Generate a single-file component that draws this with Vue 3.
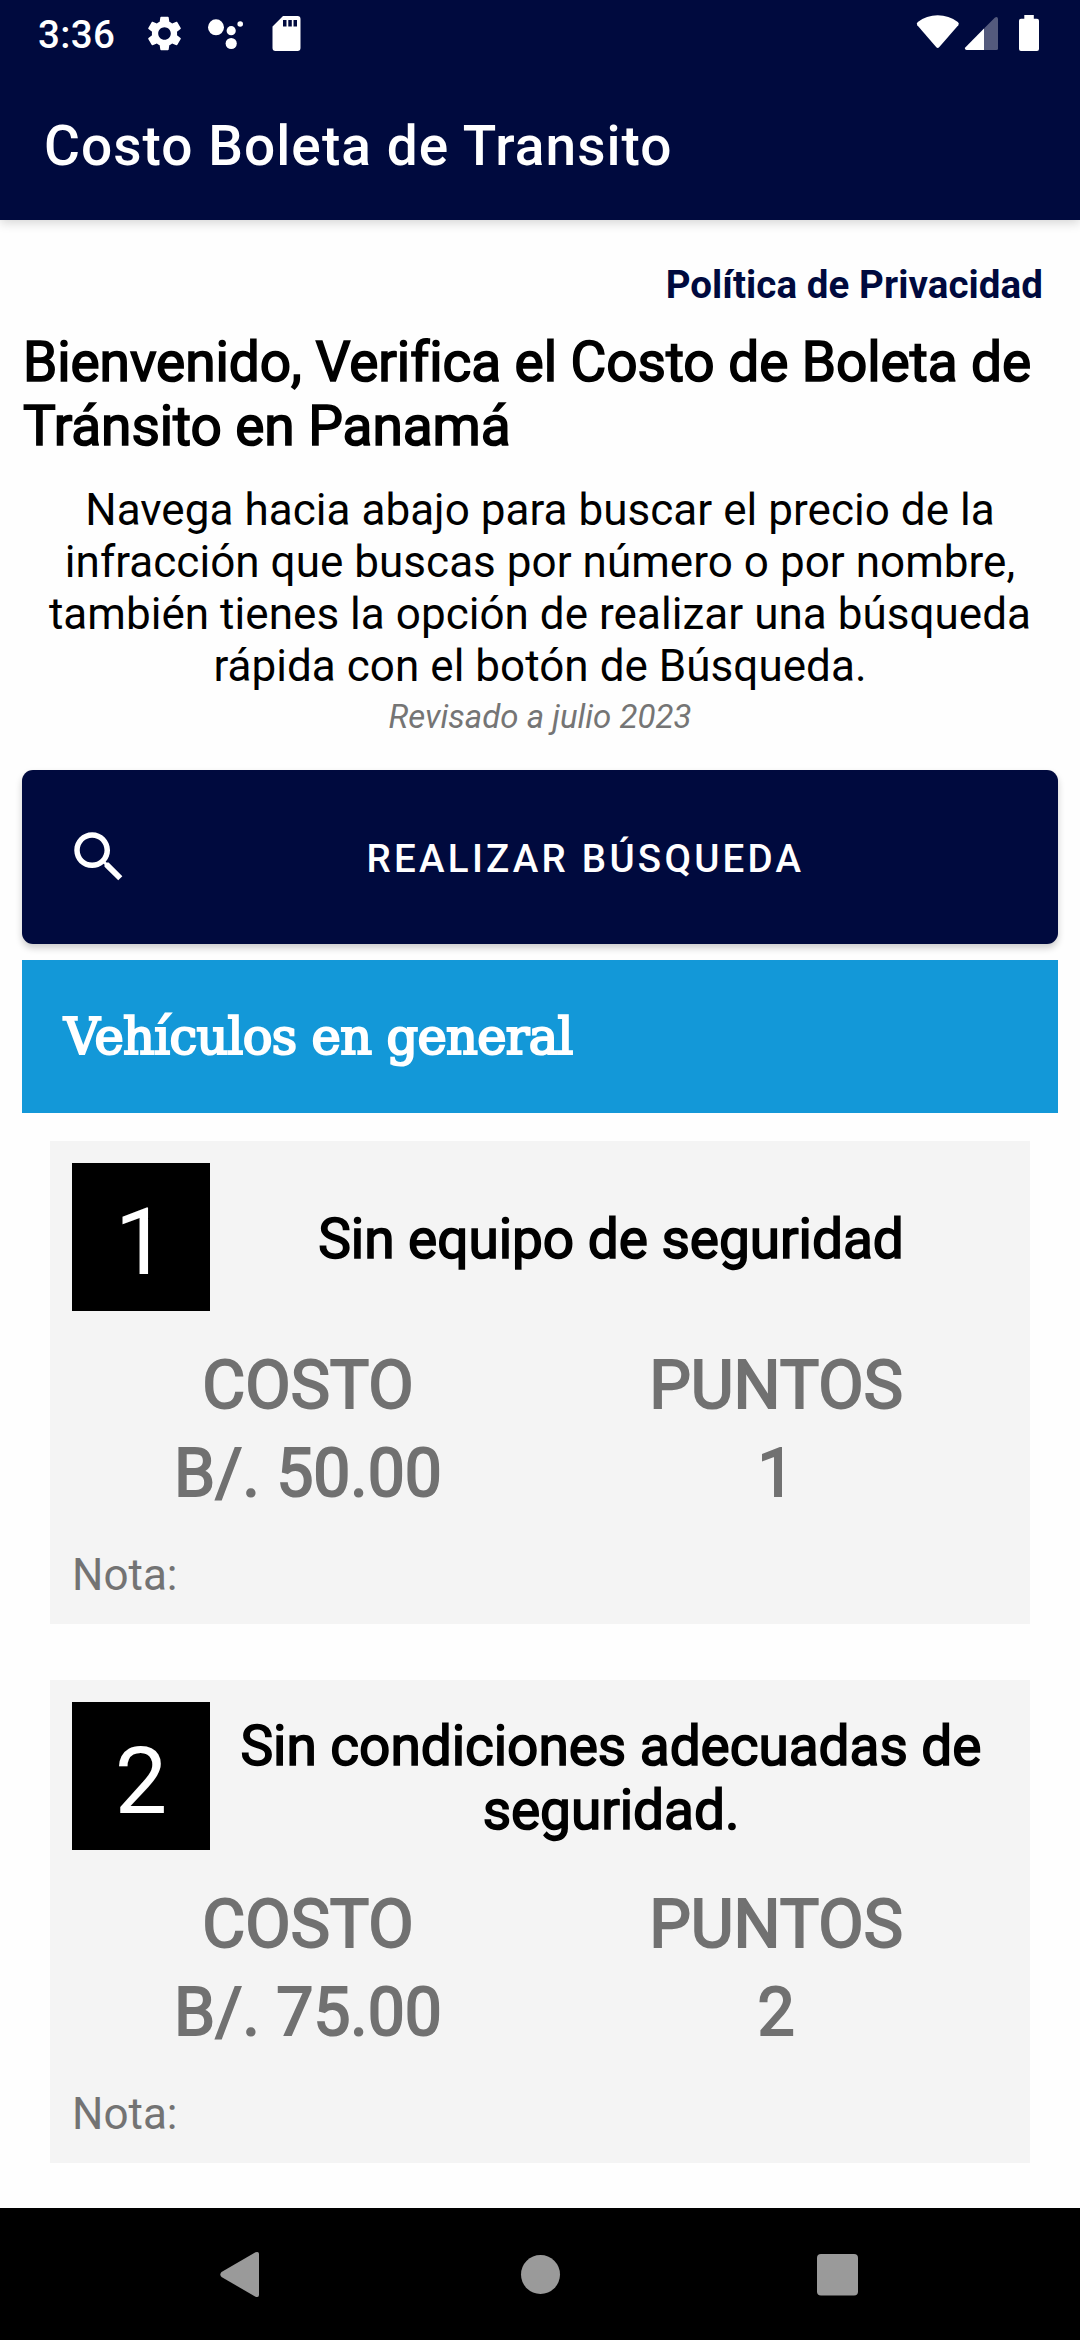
<script setup>
import { ref } from "vue";

const infracciones = ref([
  { id: 1, nombre: "Sin equipo de seguridad", costo: "50.00", puntos: 1 },
  {
    id: 2,
    nombre: "Sin condiciones adecuadas de seguridad.",
    costo: "75.00",
    puntos: 2,
  },
]);
</script>

<template>
  <div class="screen">
    <header>
      <div class="status-bar">
        <span class="time">3:36</span>
        <svg class="left-icons" width="160" height="66" viewBox="144 0 160 66">
          <g transform="translate(143.5 12.5) scale(1.75)">
            <path
              d="M19.14 12.94c.04-.3.06-.61.06-.94 0-.32-.02-.64-.07-.94l2.03-1.58c.18-.14.23-.41.12-.61l-1.92-3.32c-.12-.22-.37-.29-.59-.22l-2.39.96c-.5-.38-1.03-.7-1.62-.94l-.36-2.54c-.04-.24-.24-.41-.48-.41h-3.84c-.24 0-.43.17-.47.41l-.36 2.54c-.59.24-1.13.57-1.62.94l-2.39-.96c-.22-.08-.47 0-.59.22L2.74 8.87c-.12.21-.08.47.12.61l2.03 1.58c-.05.3-.09.63-.09.94s.02.64.07.94l-2.03 1.58c-.18.14-.23.41-.12.61l1.92 3.32c.12.22.37.29.59.22l2.39-.96c.5.38 1.03.7 1.62.94l.36 2.54c.05.24.24.41.48.41h3.84c.24 0 .44-.17.47-.41l.36-2.54c.59-.24 1.13-.56 1.62-.94l2.39.96c.22.08.47 0 .59-.22l1.92-3.32c.12-.22.07-.47-.12-.61l-2.01-1.58zM12 15.6c-1.98 0-3.6-1.62-3.6-3.6s1.62-3.6 3.6-3.6 3.6 1.62 3.6 3.6-1.62 3.6-3.6 3.6z"
            />
          </g>
          <circle cx="216" cy="27.3" r="8" />
          <circle cx="231.2" cy="30.7" r="4.6" />
          <circle cx="231.2" cy="43.5" r="5.6" />
          <circle cx="240.2" cy="24" r="2.8" />
          <path
            fill-rule="evenodd"
            d="M283 16h14.500a3 3 0 0 1 3 3v29a3 3 0 0 1-3 3h-22a3 3 0 0 1-3-3V26.500zM283 20v6.500h3.500V20zM288.300 20v6.500h3.500V20zM293.500 20v6.500h3.500V20z"
          />
        </svg>
        <svg class="right-icons" width="128" height="66" viewBox="914 0 128 66">
          <path
            d="M917.300 25.200q-1.300-1.800.5-3.200Q926.500 15.300 937.700 15.300T957.800 22q1.800 1.400.5 3.200L939.300 47q-1.600 1.800-3.200 0z"
          />
          <path d="M984 28.500V50h-17.500q-2.700-.5-1-2.700z" />
          <path
            class="dim"
            d="M984 28.500l11-11q2.600-1.500 3 1.200V48.500q0 1.500-1.500 1.500H984z"
          />
          <path
            d="M1024.300 15h9.500v3.700h3.200a2 2 0 0 1 2 2V49a2 2 0 0 1-2 2h-16a2 2 0 0 1-2-2V20.700a2 2 0 0 1 2-2h3.300z"
          />
        </svg>
      </div>
      <h1>Costo Boleta de Transito</h1>
    </header>

    <main>
      <a class="privacy">Política de Privacidad</a>
      <h2>Bienvenido, Verifica el Costo de Boleta de Tránsito en Panamá</h2>
      <p class="intro">
        Navega hacia abajo para buscar el precio de la<br />
        infracción que buscas por número o por nombre,<br />
        también tienes la opción de realizar una búsqueda<br />
        rápida con el botón de Búsqueda.
      </p>
      <p class="revised">Revisado a julio 2023</p>

      <button>
        <svg width="66" height="66" viewBox="0 0 24 24">
          <path
            d="M15.500 14h-.79l-.28-.27C15.410 12.590 16 11.110 16 9.500 16 5.910 13.090 3 9.500 3S3 5.910 3 9.500 5.910 16 9.500 16c1.610 0 3.090-.59 4.230-1.570l.27.28v.79l5 4.990L20.490 19l-4.990-5zm-6 0C7.010 14 5 11.990 5 9.500S7.010 5 9.500 5 14 7.010 14 9.500 11.990 14 9.500 14z"
          />
        </svg>
        <span>REALIZAR BÚSQUEDA</span>
      </button>

      <h3 class="category">Vehículos en general</h3>

      <section class="card" v-for="item in infracciones" :key="item.id">
        <div class="card-head">
          <div class="number">{{ item.id }}</div>
          <h4>{{ item.nombre }}</h4>
        </div>
        <div class="values">
          <span>COSTO</span>
          <span>PUNTOS</span>
          <span>B/. {{ item.costo }}</span>
          <span>{{ item.puntos }}</span>
        </div>
        <p class="note">Nota:</p>
      </section>
    </main>

    <nav>
      <svg width="1080" height="132" viewBox="0 0 1080 132">
        <path
          d="M221.500 64L255.500 44.300q3.500-1.300 3.500 1.700V87q0 3-3.500 1.700L221.500 69q-2.400-2.500 0-5z"
        />
        <circle cx="540.500" cy="66.500" r="19.500" />
        <rect x="817" y="46" width="41" height="41.500" rx="4" />
      </svg>
    </nav>
  </div>
</template>

<style>
body {
  margin: 0;
  background: #fff;
}
</style>

<style scoped>
.screen {
  display: flex;
  flex-direction: column;
  width: 1080px;
  height: 2340px;
  overflow: hidden;
  font-family: Roboto, sans-serif;
  color: #000;
  background: #fefefe;
}
h1,
h2,
h3,
h4,
p {
  margin: 0;
  font-weight: 400;
}

header {
  height: 220px;
  flex-shrink: 0;
  background: #000a3e;
  color: #fff;
  box-shadow: 0 3px 10px rgb(0 0 0 / 0.16);
}
.status-bar {
  display: flex;
  align-items: center;
  height: 66px;
  padding: 0 38px;
  fill: #fff;
}
.time {
  width: 106px;
  padding-top: 2px;
  font-size: 38.5px;
  font-weight: 500;
  letter-spacing: 0.4px;
}
.right-icons {
  margin-left: auto;
}
.dim {
  opacity: 0.33;
}
h1 {
  padding: 48px 44px 0;
  font-size: 55px;
  font-weight: 500;
  letter-spacing: 1.05px;
  line-height: 64px;
}

main {
  display: flex;
  flex-direction: column;
  flex: 1;
  padding: 42px 22px 0;
}
.privacy {
  align-self: flex-end;
  margin-right: 15px;
  font-size: 38.5px;
  font-weight: 700;
  letter-spacing: 0.08px;
  line-height: 45px;
  color: #000a3e;
}
h2 {
  margin-top: 23px;
  padding-left: 1px;
  font-size: 55px;
  letter-spacing: -0.07px;
  line-height: 64px;
  -webkit-text-stroke: 1.6px #000;
}
.intro {
  margin-top: 26px;
  font-size: 44px;
  letter-spacing: 0.04px;
  line-height: 52px;
  text-align: center;
  white-space: nowrap;
}
.revised {
  margin-top: 5px;
  font-size: 33px;
  font-style: italic;
  line-height: 39px;
  text-align: center;
  color: #757575;
}

button {
  display: flex;
  align-items: center;
  height: 174px;
  margin-top: 34px;
  padding: 0 22px 0 44px;
  border: none;
  border-radius: 11px;
  background: #000a3e;
  color: #fff;
  fill: #fff;
  font-family: inherit;
  font-size: 38.5px;
  font-weight: 500;
  letter-spacing: 3.25px;
  box-shadow: 0 4px 7px rgb(0 0 0 / 0.2);
}
button span {
  flex: 1;
  padding: 2px 0 0 3px;
  text-align: center;
}

.category {
  height: 153px;
  margin-top: 16px;
  padding-left: 42px;
  background: #1398d8;
  color: #fff;
  font-family: "DejaVu Serif", serif;
  font-size: 49.5px;
  letter-spacing: -0.7px;
  line-height: 154px;
  -webkit-text-stroke: 2.2px #fff;
}

.card {
  height: 439px;
  margin: 28px 28px 0;
  padding: 22px;
  background: #f4f4f4;
}
.card + .card {
  margin-top: 56px;
}
.card-head {
  display: flex;
  align-items: center;
  height: 148px;
}
.number {
  box-sizing: border-box;
  width: 138px;
  height: 148px;
  padding-top: 5px;
  background: #000;
  color: #fff;
  font-size: 93.5px;
  line-height: 148px;
  text-align: center;
}
h4 {
  flex: 1;
  padding: 4px 0 0 4px;
  font-size: 55px;
  letter-spacing: -0.05px;
  line-height: 64px;
  text-align: center;
  -webkit-text-stroke: 1.6px #000;
}
.values {
  display: grid;
  grid-template-columns: 1fr 1fr;
  margin: 31px -2px 0 2px;
  font-size: 66px;
  line-height: 88px;
  text-align: center;
  color: #717171;
  -webkit-text-stroke: 2px #717171;
}
.note {
  margin-top: 31px;
  font-size: 44px;
  line-height: 52px;
  color: #737373;
}

nav {
  height: 132px;
  flex-shrink: 0;
  background: #000;
  fill: #9a9a9a;
}
nav svg {
  display: block;
}
</style>
